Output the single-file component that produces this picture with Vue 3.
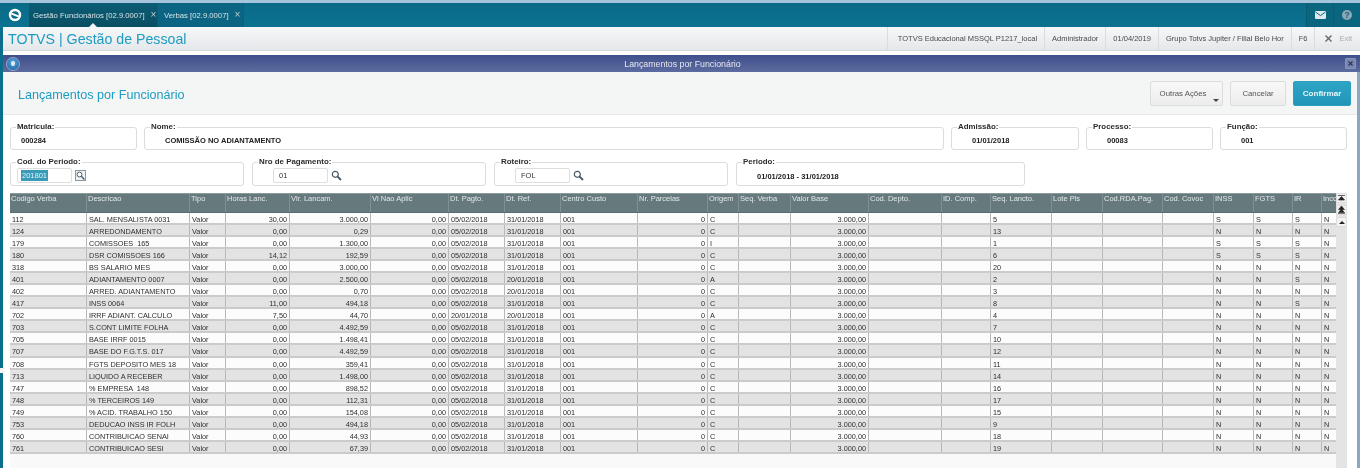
<script setup>
const headers = [
  "Codigo Verba", "Descricao", "Tipo", "Horas Lanc.", "Vlr. Lancam.", "Vl Nao Aplic", "Dt. Pagto.", "Dt. Ref.",
  "Centro Custo", "Nr. Parcelas", "Origem", "Seq. Verba", "Valor Base", "Cod. Depto.", "ID. Comp.", "Seq. Lancto.",
  "Lote Pls", "Cod.RDA.Pag.", "Cod. Covoc", "INSS", "FGTS", "IR", "Incc",
];
const rightCols = [3, 4, 5, 9, 12];

// cod, descricao, horas, valor, dt pagto, dt ref, origem, seq, inss, fgts, ir
const lancamentos = [
  ["112", "SAL. MENSALISTA 0031", "30,00", "3.000,00", "05/02/2018", "31/01/2018", "C", "5", "S", "S", "S"],
  ["124", "ARREDONDAMENTO", "0,00", "0,29", "05/02/2018", "31/01/2018", "C", "13", "N", "N", "N"],
  ["179", "COMISSOES  165", "0,00", "1.300,00", "05/02/2018", "31/01/2018", "I", "1", "S", "S", "S"],
  ["180", "DSR COMISSOES 166", "14,12", "192,59", "05/02/2018", "31/01/2018", "C", "6", "S", "S", "S"],
  ["318", "BS SALARIO MES", "0,00", "3.000,00", "05/02/2018", "31/01/2018", "C", "20", "N", "N", "N"],
  ["401", "ADIANTAMENTO 0007", "0,00", "2.500,00", "05/02/2018", "20/01/2018", "A", "2", "N", "N", "S"],
  ["402", "ARRED. ADIANTAMENTO", "0,00", "0,70", "05/02/2018", "20/01/2018", "C", "3", "N", "N", "N"],
  ["417", "INSS 0064", "11,00", "494,18", "05/02/2018", "31/01/2018", "C", "8", "N", "N", "S"],
  ["702", "IRRF ADIANT. CALCULO", "7,50", "44,70", "20/01/2018", "20/01/2018", "A", "4", "N", "N", "N"],
  ["703", "S.CONT LIMITE FOLHA", "0,00", "4.492,59", "05/02/2018", "31/01/2018", "C", "7", "N", "N", "N"],
  ["705", "BASE IRRF 0015", "0,00", "1.498,41", "05/02/2018", "31/01/2018", "C", "10", "N", "N", "N"],
  ["707", "BASE DO F.G.T.S. 017", "0,00", "4.492,59", "05/02/2018", "31/01/2018", "C", "12", "N", "N", "N"],
  ["708", "FGTS DEPOSITO MES 18", "0,00", "359,41", "05/02/2018", "31/01/2018", "C", "11", "N", "N", "N"],
  ["713", "LIQUIDO A RECEBER", "0,00", "1.498,00", "05/02/2018", "31/01/2018", "C", "14", "N", "N", "N"],
  ["747", "% EMPRESA  148", "0,00", "898,52", "05/02/2018", "31/01/2018", "C", "16", "N", "N", "N"],
  ["748", "% TERCEIROS 149", "0,00", "112,31", "05/02/2018", "31/01/2018", "C", "17", "N", "N", "N"],
  ["749", "% ACID. TRABALHO 150", "0,00", "154,08", "05/02/2018", "31/01/2018", "C", "15", "N", "N", "N"],
  ["753", "DEDUCAO INSS IR FOLH", "0,00", "494,18", "05/02/2018", "31/01/2018", "C", "9", "N", "N", "N"],
  ["760", "CONTRIBUICAO SENAI", "0,00", "44,93", "05/02/2018", "31/01/2018", "C", "18", "N", "N", "N"],
  ["761", "CONTRIBUICAO SESI", "0,00", "67,39", "05/02/2018", "31/01/2018", "C", "19", "N", "N", "N"],
];

const rows = lancamentos.map(([cod, desc, horas, valor, pag, ref, origem, seq, inss, fgts, ir]) => [
  cod, desc, "Valor", horas, valor, "0,00", pag, ref, "001", "0", origem, "", "3.000,00", "", "", seq, "", "", "", inss, fgts, ir, "N",
]);

const topInfo = ["TOTVS Educacional MSSQL P1217_local", "Administrador", "01/04/2019", "Grupo Totvs Jupiter / Filial Belo Hor", "F6"];
</script>

<template>
  <div class="app">
    <div class="strip"></div>
    <header class="topbar">
      <svg class="logo" width="14" height="14" viewBox="0 0 14 14">
        <circle cx="7" cy="7" r="5" fill="none" stroke="#fff" stroke-width="2.4" />
        <path d="M3 5.4 L11 8.6" stroke="#fff" stroke-width="2" />
      </svg>
      <div class="tab active">
        <span>Gestão Funcionários [02.9.0007]</span><span class="tab-x">×</span>
      </div>
      <div class="tab">
        <span>Verbas [02.9.0007]</span><span class="tab-x">×</span>
      </div>
      <div class="top-actions">
        <div class="top-action mail">
          <svg width="11" height="8" viewBox="0 0 11 8">
            <rect width="11" height="8" rx="1" fill="#dfe9ee" />
            <path d="M0.5 1 L5.5 4.6 L10.5 1" fill="none" stroke="#0a6480" stroke-width="1" />
          </svg>
        </div>
        <div class="top-action help"><span>?</span></div>
      </div>
    </header>

    <div class="shell">
      <i class="grip"></i>
      <div class="subbar">
        <h1>TOTVS | Gestão de Pessoal</h1>
        <div class="info">
          <span v-for="item in topInfo" :key="item" class="info-item">{{ item }}</span>
          <span class="info-item exit">
            <svg width="7" height="7" viewBox="0 0 7 7"><path d="M0.5 0.5 L6.5 6.5 M6.5 0.5 L0.5 6.5" stroke="#666" stroke-width="1.4" /></svg>
            <em>Exit</em>
          </span>
        </div>
      </div>

      <section class="window">
        <div class="win-title">
          <span class="win-icon"><i></i></span>
          <span class="win-name">Lançamentos por Funcionário</span>
          <button class="win-close">
            <svg width="5" height="5" viewBox="0 0 5 5"><path d="M0.5 0.5 L4.5 4.5 M4.5 0.5 L0.5 4.5" stroke="#2b3560" stroke-width="1.2" /></svg>
          </button>
        </div>

        <div class="win-body">
          <div class="win-head">
            <h2>Lançamentos por Funcionário</h2>
            <div class="actions">
              <button class="btn more">Outras Ações<i class="caret"></i></button>
              <button class="btn cancel">Cancelar</button>
              <button class="btn confirm">Confirmar</button>
            </div>
          </div>

          <div class="form">
            <div class="line one">
              <fieldset class="compact"><legend>Matricula:</legend><b>000284</b></fieldset>
              <fieldset><legend>Nome:</legend><b>COMISSÃO NO ADIANTAMENTO</b></fieldset>
              <fieldset><legend>Admissão:</legend><b>01/01/2018</b></fieldset>
              <fieldset><legend>Processo:</legend><b>00083</b></fieldset>
              <fieldset><legend>Função:</legend><b>001</b></fieldset>
            </div>
            <div class="line two">
              <fieldset class="with-input first">
                <legend>Cod. do Periodo:</legend>
                <div class="lookup">
                  <div class="field"><span class="selected">201801</span></div>
                  <svg width="11" height="11" viewBox="0 0 11 11">
                    <rect x="0.5" y="0.5" width="10" height="10" fill="#eef1f3" stroke="#8d99a1" />
                    <circle cx="4.5" cy="4.5" r="2.4" fill="#fff" stroke="#4c5c68" stroke-width="1" />
                    <path d="M6.3 6.3 L9.4 9.4" stroke="#4c5c68" stroke-width="1.4" />
                  </svg>
                </div>
              </fieldset>
              <fieldset class="with-input">
                <legend>Nro de Pagamento:</legend>
                <div class="lookup">
                  <div class="field">01</div>
                  <svg width="11" height="11" viewBox="0 0 11 11">
                    <circle cx="4.3" cy="4.3" r="3" fill="#fff" stroke="#4a5a66" stroke-width="1.2" />
                    <path d="M6.5 6.5 L10 10" stroke="#4a5a66" stroke-width="1.8" />
                  </svg>
                </div>
              </fieldset>
              <fieldset class="with-input">
                <legend>Roteiro:</legend>
                <div class="lookup">
                  <div class="field">FOL</div>
                  <svg width="11" height="11" viewBox="0 0 11 11">
                    <circle cx="4.3" cy="4.3" r="3" fill="#fff" stroke="#4a5a66" stroke-width="1.2" />
                    <path d="M6.5 6.5 L10 10" stroke="#4a5a66" stroke-width="1.8" />
                  </svg>
                </div>
              </fieldset>
              <fieldset class="plain"><legend>Periodo:</legend><b>01/01/2018 - 31/01/2018</b></fieldset>
            </div>
          </div>

          <div class="grid-wrap">
            <div class="table">
              <div class="row head">
                <div v-for="h in headers" :key="h" class="cell">{{ h }}</div>
              </div>
              <div v-for="(row, r) in rows" :key="row[0]" class="row" :class="{ even: r % 2 }">
                <div v-for="(value, c) in row" :key="c" class="cell" :class="{ right: rightCols.includes(c) }">{{ value }}</div>
              </div>
            </div>
            <div class="scroller">
              <button class="sbtn">
                <svg width="7" height="6" viewBox="0 0 7 6"><path d="M0 0.5 H7 M3.5 1.5 L6.5 5 H0.5 Z" fill="#222" stroke="#222" stroke-width="0.7" /></svg>
              </button>
              <button class="sbtn">
                <svg width="7" height="8" viewBox="0 0 7 8"><path d="M3.5 0 L6.5 3.5 H0.5 Z M3.5 3 L6.5 6.5 H0.5 Z M0 7.5 H7" fill="#222" stroke="#222" stroke-width="0.6" /></svg>
              </button>
              <button class="sbtn">
                <svg width="6" height="3" viewBox="0 0 6 3"><path d="M3 0 L6 3 H0 Z" fill="#222" /></svg>
              </button>
            </div>
          </div>
        </div>
      </section>
    </div>
  </div>
</template>

<style scoped>
.app {
  width: 1360px;
  height: 468px;
  overflow: hidden;
  display: flex;
  flex-direction: column;
  background: #fff;
  color: #333;
  font-family: "Liberation Sans", Arial, sans-serif;
  filter: blur(0.3px);
}
.strip {
  height: 3px;
  background: #a5c5dc;
}
.topbar {
  height: 24px;
  display: flex;
  align-items: stretch;
  background: linear-gradient(#0a6b88, #0b7290);
  color: #d5e2e7;
  font-size: 7.7px;
}
.logo {
  align-self: center;
  margin: 0 7px 0 8px;
}
.tab {
  width: 86px;
  display: flex;
  align-items: center;
  padding-left: 6px;
  box-sizing: border-box;
  background: #0b6582;
  border-right: 1px solid #0a5f7a;
}
.tab.active {
  position: relative;
  width: 129px;
  padding-left: 4px;
  background: linear-gradient(#0b5c74, #0a4f62);
}
.tab.active::after {
  content: "";
  position: absolute;
  left: 60px;
  bottom: 0;
  border: 4px solid transparent;
  border-top: 0;
  border-bottom-color: #f2f4f6;
}
.tab-x {
  margin-left: 6px;
  font-size: 10px;
  line-height: 8px;
  color: #b9ccd4;
}
.top-actions {
  margin-left: auto;
  display: flex;
}
.top-action {
  width: 26px;
  display: flex;
  align-items: center;
  justify-content: center;
  background: #0a657f;
  border-left: 1px solid #0a5a72;
}
.help span {
  width: 10px;
  height: 10px;
  border-radius: 50%;
  background: #8fa9b4;
  color: #0a6480;
  font-size: 9px;
  font-weight: 700;
  line-height: 10px;
  text-align: center;
}
.shell {
  position: relative;
  flex: 1;
  min-height: 0;
  display: flex;
  flex-direction: column;
  border-left: 3px solid #0a6e8c;
}
.grip {
  position: absolute;
  left: -3px;
  top: 341px;
  width: 5px;
  height: 5px;
  background: #f4f4f4;
}
.subbar {
  height: 24px;
  box-sizing: border-box;
  display: flex;
  align-items: center;
  background: linear-gradient(#f6f7f8, #e5e8eb);
  border-bottom: 1px solid #d3d6d9;
}
.subbar h1 {
  margin: 0 0 0 5px;
  padding-top: 1px;
  font-size: 14.2px;
  font-weight: 400;
  color: #1d9cc2;
}
.info {
  margin-left: auto;
  height: 100%;
  display: flex;
  font-size: 7.5px;
  color: #4a4a4a;
}
.info-item {
  display: flex;
  align-items: center;
  padding: 0 7px;
  border-left: 1px solid #dadde0;
}
.info-item:first-child {
  padding-left: 10px;
}
.exit {
  gap: 7px;
  padding: 0 8px 0 10px;
}
.exit em {
  font-style: normal;
  color: #aaa;
}
.window {
  flex: 1;
  min-height: 0;
  display: flex;
  flex-direction: column;
  margin-top: 4px;
}
.win-title {
  height: 17px;
  flex: none;
  display: flex;
  align-items: center;
  justify-content: space-between;
  padding: 0 2px 0 3px;
  background: linear-gradient(#3f4f8b, #5c6b9f);
  color: #e6e8f0;
  font-size: 8.8px;
}
.win-icon {
  width: 12px;
  height: 12px;
  border-radius: 50%;
  background: radial-gradient(circle at 50% 35%, #5aa6e0, #15609f);
  border: 1px solid #9aa6c2;
  display: flex;
  align-items: center;
  justify-content: center;
}
.win-icon i {
  width: 4px;
  height: 5px;
  border-radius: 2px;
  background: #dcecf8;
}
.win-close {
  width: 11px;
  height: 11px;
  padding: 0;
  margin-right: 2px;
  display: flex;
  align-items: center;
  justify-content: center;
  background: #7a86b0;
  border: 1px solid #8a95ba;
  border-radius: 1px;
}
.win-body {
  flex: 1;
  min-height: 0;
  display: flex;
  flex-direction: column;
  background: #fff;
  border-right: 3px solid #8ea7c0;
}
.win-head {
  height: 43px;
  flex: none;
  box-sizing: border-box;
  display: flex;
  align-items: center;
  justify-content: space-between;
  padding: 1px 6px 0 15px;
  background: #f4f5f5;
  border-bottom: 1px solid #e8e8e8;
}
.win-head h2 {
  margin: 0;
  padding-top: 2px;
  font-size: 12.6px;
  font-weight: 400;
  color: #1d9cc2;
}
.actions {
  display: flex;
  gap: 7px;
}
.btn {
  height: 25px;
  padding: 0;
  font-family: inherit;
  font-size: 7.8px;
  color: #555;
  background: linear-gradient(#f8f8f8, #ededed);
  border: 1px solid #dcdcdc;
  border-radius: 2px;
}
.more {
  position: relative;
  width: 73px;
  padding-right: 7px;
}
.caret {
  position: absolute;
  right: 3px;
  bottom: 3px;
  border: 3.5px solid transparent;
  border-bottom: 0;
  border-top-color: #444;
}
.cancel {
  width: 56px;
}
.confirm {
  width: 58px;
  font-weight: 700;
  font-size: 8.1px;
  color: #e8f6fa;
  background: linear-gradient(#2ea5c6, #2195b7);
  border-color: #2ea0bf;
}
.form {
  flex: none;
  display: flex;
  flex-direction: column;
  gap: 7px;
  padding: 7px 0 0 7px;
}
.line {
  display: grid;
  column-gap: 7px;
}
.one {
  grid-template-columns: 127px 800px 128px 127px 127px;
}
.two {
  grid-template-columns: 234px 234px 234px 289px;
  column-gap: 8px;
}
fieldset {
  min-width: 0;
  margin: 0;
  padding: 0 0 0 20px;
  height: 28px;
  box-sizing: border-box;
  border: 1px solid #dcdcdc;
  border-radius: 3px;
  font-size: 7.5px;
  line-height: 17px;
  color: #222;
}
.plain {
  height: 29px;
  line-height: 19px;
}
.compact {
  padding-left: 10px;
}
legend {
  margin-left: -15px;
  padding: 0 1px;
  font-size: 7.9px;
  font-weight: 700;
  line-height: 10px;
  color: #2c2c2c;
}
.compact legend {
  margin-left: -5px;
}
.with-input {
  height: 29px;
}
.first {
  padding-left: 6px;
}
.first legend {
  margin-left: -1px;
}
.lookup {
  display: flex;
  align-items: center;
  gap: 3px;
  margin-top: 1px;
}
.field {
  width: 55px;
  height: 15px;
  box-sizing: border-box;
  padding-left: 5px;
  border: 1px solid #dedede;
  border-radius: 2px;
  background: #fff;
  font-size: 7.5px;
  line-height: 13px;
  color: #333;
}
.first .field {
  padding-left: 3px;
}
.selected {
  display: inline-block;
  padding: 0 1px;
  line-height: 11px;
  background: #3a9bb8;
  color: #dff2f6;
}
.grid-wrap {
  flex: 1;
  min-height: 0;
  display: flex;
  margin: 7px 0 0 7px;
}
.table {
  width: 1326px;
  flex: none;
  background: #f9f9f9;
}
.row {
  display: grid;
  grid-template-columns: 77px 103px 36px 64px 81px 78px 56px 56px 77px 70px 31px 52px 78px 73px 49px 61px 51px 60px 51px 40px 39px 29px 14px;
  height: 12px;
  box-sizing: border-box;
  background: #fcfcfc;
  border-bottom: 2px solid #cbcbcb;
  font-size: 7.3px;
  line-height: 11px;
  color: #2e2e2e;
}
.row:nth-child(13) {
  height: 13px;
}
.row.even {
  background: #e3e3e3;
}
.row.head {
  height: 20px;
  background: #667a7e;
  border-top: 1px solid #8a9a9d;
  border-bottom: 1px solid #5a6d71;
  color: #e2e8e9;
  font-size: 7.5px;
  line-height: 10px;
}
.cell {
  box-sizing: border-box;
  padding: 1px 0 0 2px;
  overflow: hidden;
  white-space: pre;
  border-right: 1px solid #b8b8b8;
}
.head .cell {
  padding-top: 0;
  padding-left: 1px;
  border-right-color: #7f9094;
}
.cell:last-child {
  border-right: 0;
}
.cell.right {
  padding-right: 2px;
  text-align: right;
}
.scroller {
  width: 11px;
  flex: none;
  display: flex;
  flex-direction: column;
  align-items: center;
  gap: 2px;
  background: #e4e4e4;
}
.sbtn {
  width: 11px;
  height: 10px;
  padding: 0;
  display: flex;
  align-items: center;
  justify-content: center;
  background: #f2f2f2;
  border: 1px solid #dcdcdc;
  border-radius: 1px;
}
</style>
